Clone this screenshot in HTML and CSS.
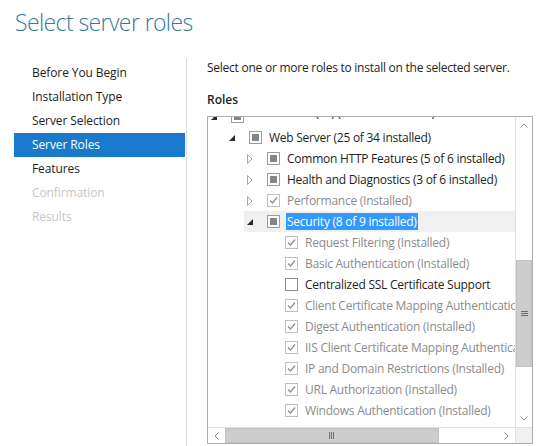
FILE: index.html
```html
<!DOCTYPE html>
<html>
<head>
<meta charset="utf-8">
<link rel="stylesheet" href="styles.css">
</head>
<body>
<div class="page">
  <h1 class="title">Select server roles</h1>
  <div class="main">
    <nav class="nav">
      <div class="nav-item">Before You Begin</div>
      <div class="nav-item">Installation Type</div>
      <div class="nav-item">Server Selection</div>
      <div class="nav-item active">Server Roles</div>
      <div class="nav-item">Features</div>
      <div class="nav-item disabled">Confirmation</div>
      <div class="nav-item disabled">Results</div>
    </nav>
    <section class="content">
      <p class="intro">Select one or more roles to install on the selected server.</p>
      <h2 class="label">Roles</h2>
      <div class="listbox">
        <div class="viewport">
          <div class="tree">
            <div class="row l0 clipped"><div class="item"><span class="exp"><svg class="tri-open" width="6" height="6" viewBox="0 0 6 6"><polygon points="6,0 6,6 0,6"/></svg></span><span class="cb ind"></span><span class="txt">Web Server (IIS) (27 of 43 installed)</span></div></div>
            <div class="row l1"><div class="item"><span class="exp"><svg class="tri-open" width="6" height="6" viewBox="0 0 6 6"><polygon points="6,0 6,6 0,6"/></svg></span><span class="cb ind"></span><span class="txt">Web Server (25 of 34 installed)</span></div></div>
            <div class="row l2"><div class="item"><span class="exp"><svg class="tri-closed" width="6" height="10" viewBox="0 0 6 10"><polygon points="0.5,0.5 5,5 0.5,9.5"/></svg></span><span class="cb ind"></span><span class="txt">Common HTTP Features (5 of 6 installed)</span></div></div>
            <div class="row l2"><div class="item"><span class="exp"><svg class="tri-closed" width="6" height="10" viewBox="0 0 6 10"><polygon points="0.5,0.5 5,5 0.5,9.5"/></svg></span><span class="cb ind"></span><span class="txt">Health and Diagnostics (3 of 6 installed)</span></div></div>
            <div class="row l2"><div class="item dim"><span class="exp"><svg class="tri-closed" width="6" height="10" viewBox="0 0 6 10"><polygon points="0.5,0.5 5,5 0.5,9.5"/></svg></span><span class="cb chk"><svg width="11" height="11" viewBox="0 0 11 11"><polyline points="2,5.5 4.5,8 9,2.5"/></svg></span><span class="txt">Performance (Installed)</span></div></div>
            <div class="row l2"><div class="item sel"><span class="exp"><svg class="tri-open" width="6" height="6" viewBox="0 0 6 6"><polygon points="6,0 6,6 0,6"/></svg></span><span class="cb ind"></span><span class="txt">Security (8 of 9 installed)</span></div></div>
            <div class="row l3"><div class="item dim"><span class="exp"></span><span class="cb chk"><svg width="11" height="11" viewBox="0 0 11 11"><polyline points="2,5.5 4.5,8 9,2.5"/></svg></span><span class="txt">Request Filtering (Installed)</span></div></div>
            <div class="row l3"><div class="item dim"><span class="exp"></span><span class="cb chk"><svg width="11" height="11" viewBox="0 0 11 11"><polyline points="2,5.5 4.5,8 9,2.5"/></svg></span><span class="txt">Basic Authentication (Installed)</span></div></div>
            <div class="row l3"><div class="item"><span class="exp"></span><span class="cb"></span><span class="txt">Centralized SSL Certificate Support</span></div></div>
            <div class="row l3"><div class="item dim"><span class="exp"></span><span class="cb chk"><svg width="11" height="11" viewBox="0 0 11 11"><polyline points="2,5.5 4.5,8 9,2.5"/></svg></span><span class="txt">Client Certificate Mapping Authentication (Installed)</span></div></div>
            <div class="row l3"><div class="item dim"><span class="exp"></span><span class="cb chk"><svg width="11" height="11" viewBox="0 0 11 11"><polyline points="2,5.5 4.5,8 9,2.5"/></svg></span><span class="txt">Digest Authentication (Installed)</span></div></div>
            <div class="row l3"><div class="item dim"><span class="exp"></span><span class="cb chk"><svg width="11" height="11" viewBox="0 0 11 11"><polyline points="2,5.5 4.5,8 9,2.5"/></svg></span><span class="txt">IIS Client Certificate Mapping Authentication (Installed)</span></div></div>
            <div class="row l3"><div class="item dim"><span class="exp"></span><span class="cb chk"><svg width="11" height="11" viewBox="0 0 11 11"><polyline points="2,5.5 4.5,8 9,2.5"/></svg></span><span class="txt">IP and Domain Restrictions (Installed)</span></div></div>
            <div class="row l3"><div class="item dim"><span class="exp"></span><span class="cb chk"><svg width="11" height="11" viewBox="0 0 11 11"><polyline points="2,5.5 4.5,8 9,2.5"/></svg></span><span class="txt">URL Authorization (Installed)</span></div></div>
            <div class="row l3"><div class="item dim"><span class="exp"></span><span class="cb chk"><svg width="11" height="11" viewBox="0 0 11 11"><polyline points="2,5.5 4.5,8 9,2.5"/></svg></span><span class="txt">Windows Authentication (Installed)</span></div></div>
          </div>
        </div>
        <div class="vscroll">
          <div class="sbtn"><svg width="8" height="5" viewBox="0 0 8 5"><polyline points="0.5,4.5 4,1 7.5,4.5"/></svg></div>
          <div class="vtrack"><div class="vthumb"><svg width="7" height="6" viewBox="0 0 7 6"><path d="M0 0.5H7M0 2.5H7M0 4.5H7"/></svg></div></div>
          <div class="sbtn"><svg width="8" height="5" viewBox="0 0 8 5"><polyline points="0.5,0.5 4,4 7.5,0.5"/></svg></div>
        </div>
        <div class="hscroll">
          <div class="hbtn"><svg width="5" height="8" viewBox="0 0 5 8"><polyline points="4.5,0.5 1,4 4.5,7.5"/></svg></div>
          <div class="htrack"><div class="hthumb"><svg width="6" height="7" viewBox="0 0 6 7"><path d="M0.5 0V7M2.5 0V7M4.5 0V7"/></svg></div></div>
          <div class="hbtn"><svg width="5" height="8" viewBox="0 0 5 8"><polyline points="0.5,0.5 4,4 0.5,7.5"/></svg></div>
        </div>
        <div class="corner"></div>
      </div>
    </section>
  </div>
</div>
</body>
</html>
```

FILE: styles.css
```css
* { box-sizing: border-box; }
html, body { margin: 0; padding: 0; background: #fff; }
body {
  font-family: "Open Sans", "Noto Sans", sans-serif;
  font-size: 12px;
  color: #1e1e1e;
  width: 536px;
  height: 446px;
  overflow: hidden;
}
.page { display: flex; flex-direction: column; }
.title {
  margin: 0;
  height: 58px;
  padding: 6px 0 0 15px;
  font-size: 23px;
  line-height: 32px;
  font-weight: 300;
  letter-spacing: -0.6px;
  color: #3479a0;
}
.main { display: flex; }
.nav {
  width: 187px;
  padding: 3px 1px 0 14px;
  border-right: 1px solid #dcdcdc;
  height: 388px;
}
.nav-item {
  height: 24px;
  line-height: 24px;
  padding-left: 18px;
  color: #1e1e1e;
  letter-spacing: -0.1px;
}
.nav-item.active { background: #1979ca; color: #fff; }
.nav-item.disabled { color: #c6c6c6; }
.content {
  flex: 1;
  padding: 2px 3px 0 20px;
  letter-spacing: -0.25px;
}
.intro { margin: 0; line-height: 16px; }
.label { margin: 16px 0 0; font-size: 12px; font-weight: 600; line-height: 16px; letter-spacing: 0; }
.listbox {
  margin-top: 8px;
  width: 326px;
  height: 328px;
  border: 1px solid #acacac;
  display: grid;
  grid-template-columns: 307px 17px;
  grid-template-rows: 310px 16px;
}
.viewport { overflow: hidden; }
.tree { margin-top: -11px; }
.row { height: 21px; display: flex; }
.row.l0 { padding-left: 0; }
.row.l1 { padding-left: 18px; }
.row.l2 { padding-left: 36px; }
.row.l3 { padding-left: 54px; }
.item {
  flex: 1;
  display: flex;
  align-items: center;
  white-space: nowrap;
  min-width: 0;
}
.row.clipped .txt { line-height: 13px; align-self: flex-start; }
.item.sel { background: #f0f0f0; }
.item.sel .txt { background: #3399ff; color: #fff; padding: 0 1px; margin-left: -1px; line-height: 17px; }
.item.dim .txt { color: #8c8c8c; }
.exp { width: 23px; flex: none; display: flex; align-items: center; padding-left: 3px; }
.tri-open { fill: #2a2a2a; }
.tri-closed { fill: none; stroke: #a8a8a8; stroke-width: 1; }
.cb {
  width: 13px; height: 13px; flex: none;
  border: 1px solid #8f8f8f;
  background: #fff;
  margin-right: 7px;
  display: flex; align-items: center; justify-content: center;
}
.cb.ind { border-color: #9c9c9c; }
.cb.ind::after { content: ""; width: 7px; height: 7px; background: #858585; }
.cb.chk { border-color: #c0c0c0; }
.cb.chk svg { fill: none; stroke: #8f8f8f; stroke-width: 1.3; }
.txt { line-height: 21px; }
.vscroll {
  border-left: 1px solid #e2e2e2;
  display: flex; flex-direction: column;
  background: #fff;
}
.sbtn { height: 17px; display: flex; align-items: center; justify-content: center; }
.sbtn svg, .hbtn svg { fill: none; stroke: #8a8a8a; stroke-width: 1; }
.vtrack { flex: 1; }
.vthumb {
  margin-top: 126px;
  height: 107px;
  background: #cdcdcd;
  border: 1px solid #c2c2c2;
  display: flex; align-items: center; justify-content: center;
}
.vthumb svg, .hthumb svg { fill: none; stroke: #6e6e6e; stroke-width: 1; }
.hscroll {
  border-top: 1px solid #e2e2e2;
  display: flex;
  background: #fff;
}
.hbtn { width: 17px; display: flex; align-items: center; justify-content: center; }
.htrack { flex: 1; }
.hthumb {
  width: 214px;
  height: 100%;
  background: #cdcdcd;
  border: 1px solid #c2c2c2;
  display: flex; align-items: center; justify-content: center;
}
.corner { background: #f0f0f0; border-top: 1px solid #e2e2e2; border-left: 1px solid #e2e2e2; }
```
